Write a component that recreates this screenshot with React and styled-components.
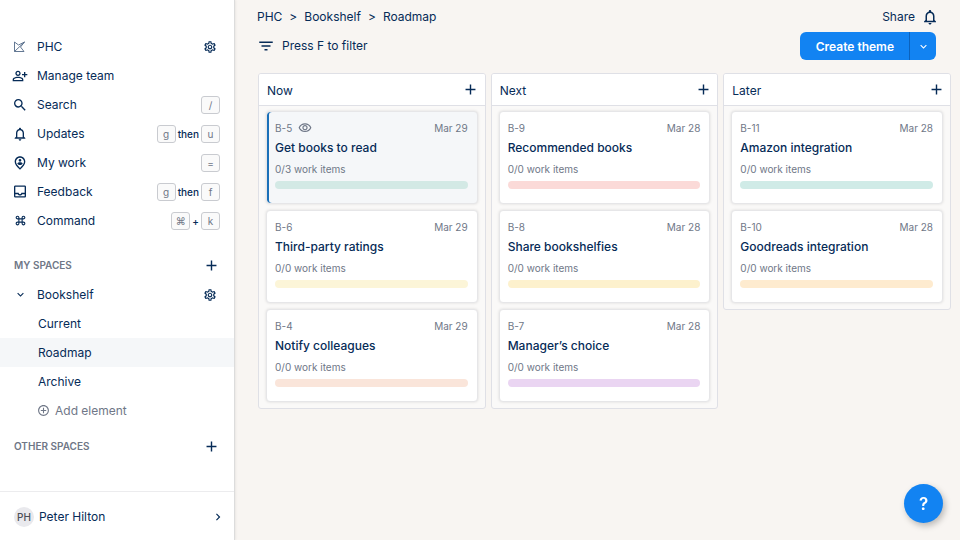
import React from "react";
import styled, { createGlobalStyle, css } from "styled-components";
import {
  MdOutlinePersonAddAlt,
  MdSearch,
  MdNotificationsNone,
  MdOutlinePersonPinCircle,
  MdOutlineInbox,
  MdKeyboardCommandKey,
  MdOutlineSettings,
  MdAdd,
  MdFilterList,
  MdOutlineVisibility,
  MdExpandMore,
  MdChevronRight,
  MdAddCircleOutline,
} from "react-icons/md";

const navy = "#062b57";
const grey = "#6f7787";
const blue = "#1283f2";

const GlobalStyle = createGlobalStyle`
  *, *::before, *::after { box-sizing: border-box; }
  body {
    margin: 0;
    background: #f8f5f2;
    color: ${navy};
    font-family: Inter, "Liberation Sans", sans-serif;
    font-size: 12px;
    line-height: 16px;
  }
  button { font: inherit; color: inherit; cursor: pointer; }
  ul, ol, h1, h2, h3, p { margin: 0; padding: 0; list-style: none; font: inherit; }
`;

const Layout = styled.div`
  display: flex;
  min-height: 100vh;
`;

const Sidebar = styled.aside`
  display: flex;
  flex-direction: column;
  flex: none;
  width: 235px;
  background: #fff;
  border-right: 1px solid #dcdcdc;
  box-shadow: 1px 0 2px rgba(0, 0, 0, 0.06);
`;

const Nav = styled.nav`
  flex: 1;
  padding-top: 32px;
`;

const rowStyle = css`
  display: flex;
  align-items: center;
  height: 29px;
`;

const NavRow = styled.li`
  ${rowStyle}
  padding-right: 14px;
`;

const SpaceRow = styled.div`
  ${rowStyle}
  padding-right: 14px;
`;

const NavLink = styled.a`
  display: flex;
  align-items: center;
  flex: 1;
  gap: 9px;
  padding-left: 12px;
  color: inherit;
  text-decoration: none;
`;

const IconSlot = styled.span`
  display: flex;
  justify-content: center;
  width: 16px;
`;

const Shortcut = styled.span`
  display: flex;
  align-items: center;
  gap: 2px;
  font-size: 10px;
  font-weight: 500;
`;

const Key = styled.kbd`
  display: flex;
  align-items: center;
  justify-content: center;
  width: 19px;
  height: 18px;
  border: 1px solid #c9cbd0;
  border-radius: 3px;
  background: #fafafa;
  color: ${grey};
  font: 400 10px/16px Inter, sans-serif;
`;

const IconButton = styled.button`
  display: flex;
  align-items: center;
  justify-content: center;
  width: 20px;
  height: 20px;
  padding: 0;
  border: 0;
  background: none;
`;

const SectionHeader = styled.div`
  ${rowStyle}
  justify-content: space-between;
  margin-top: ${(p) => (p.$tight ? "7px" : "16px")};
  padding: 0 13px 0 14px;
`;

const SectionTitle = styled.h2`
  padding-bottom: 1px;
  color: ${grey};
  font-size: 10px;
  font-weight: 600;
`;

const SubLink = styled.a`
  ${rowStyle}
  padding-left: 38px;
  background: ${(p) => (p.$active ? "#f5f7f9" : "transparent")};
  color: inherit;
  text-decoration: none;
`;

const AddElement = styled.button`
  ${rowStyle}
  gap: 5px;
  padding: 0 0 0 37px;
  border: 0;
  background: none;
  color: ${grey};
`;

const Profile = styled.button`
  display: flex;
  align-items: center;
  gap: 5px;
  height: 49px;
  padding: 2px 9px 0 14px;
  border: 0;
  border-top: 1px solid #ececee;
  background: none;
  text-align: left;
`;

const Avatar = styled.span`
  width: 20px;
  border-radius: 50%;
  background: #e9e9ed;
  color: #4b4e57;
  font-size: 10px;
  font-weight: 500;
  line-height: 20px;
  text-align: center;
`;

const ProfileName = styled.span`
  flex: 1;
`;

const Main = styled.main`
  flex: 1;
  min-width: 0;
  padding: 8px 9px 24px 22px;
`;

const TopBar = styled.header`
  display: flex;
  align-items: center;
  justify-content: space-between;
  height: 18px;
  padding-right: 11px;
`;

const Breadcrumbs = styled.ol`
  display: flex;
  gap: 7px;
`;

const PlainLink = styled.a`
  color: inherit;
  text-decoration: none;
`;

const TopActions = styled.div`
  display: flex;
  align-items: center;
  gap: 5px;
`;

const TextButton = styled.button`
  display: flex;
  align-items: center;
  gap: 7px;
  padding: 0;
  border: 0;
  background: none;
`;

const ToolBar = styled.div`
  display: flex;
  align-items: center;
  justify-content: space-between;
  margin-top: 6px;
  padding-right: 15px;
`;

const SplitButton = styled.div`
  display: flex;
  height: 28px;
  overflow: hidden;
  border-radius: 6px;
  background: ${blue};
  color: #fff;
`;

const CreateButton = styled.button`
  padding: 2px 15px 0 16px;
  border: 0;
  background: none;
  font-weight: 600;
`;

const SplitToggle = styled.button`
  display: flex;
  align-items: center;
  justify-content: center;
  width: 27px;
  padding: 0;
  border: 0;
  border-left: 1px solid #0b62bd;
  background: none;
`;

const Board = styled.div`
  display: grid;
  grid-template-columns: repeat(3, minmax(0, 1fr));
  align-items: start;
  gap: 5px;
  margin: 13px 0 0 1px;
`;

const Column = styled.section`
  overflow: hidden;
  border: 1px solid #dfe0e6;
  border-radius: 3px;
  background: #faf9f8;
`;

const ColumnHeader = styled.header`
  display: flex;
  align-items: center;
  justify-content: space-between;
  height: 32px;
  padding: 0 4px 0 8px;
  border-bottom: 1px solid #dfe0e6;
  background: #fff;
`;

const ColumnTitle = styled.h2`
  padding-top: 2px;
`;

const CardList = styled.ul`
  display: grid;
  gap: 6px;
  padding: 5px 7px 6px;
`;

const Card = styled.li`
  padding: 8px 9px 14px 8px;
  border: 1px solid #e6e6e8;
  border-radius: 4px;
  background: ${(p) => (p.$selected ? "#f5f7f9" : "#fff")};
  box-shadow: ${(p) => (p.$selected ? "inset 2px 0 0 #1b70b8, " : "")}0 0 3px rgba(0, 0, 0, 0.13);
`;

const CardMeta = styled.div`
  display: flex;
  align-items: center;
  gap: 6px;
  color: ${grey};
  font-size: 10px;
`;

const CardDate = styled.time`
  margin-left: auto;
`;

const CardTitle = styled.h3`
  margin: 2px 0 3px;
  font-weight: 500;
  line-height: 20px;
`;

const WorkItems = styled.p`
  color: ${grey};
  font-size: 10px;
`;

const ProgressBar = styled.div`
  height: 8px;
  margin-top: 4px;
  border-radius: 4px;
  background: ${(p) => p.$tone};
`;

const HelpButton = styled.button`
  position: fixed;
  right: 17px;
  bottom: 17px;
  width: 39px;
  height: 39px;
  padding: 0;
  border: 0;
  border-radius: 50%;
  background: ${blue};
  box-shadow: 2px 3px 6px rgba(0, 0, 0, 0.25);
  color: #fff;
  font-size: 17px;
  font-weight: 600;
`;

const WorkspaceLogo = () => (
  <svg width="14" height="12" viewBox="0 0 14 12" fill="none" stroke="#526a88" strokeWidth="0.9" strokeLinejoin="round">
    <path d="M1.5 1v9.5h9.5L7.5 6 11.5 1 1.5 10.5M1.5 1 5.5 4 11.5 1" />
  </svg>
);

const shortcuts = [
  { label: "PHC", icon: <WorkspaceLogo />, settings: true },
  { label: "Manage team", icon: <MdOutlinePersonAddAlt size={18} /> },
  { label: "Search", icon: <MdSearch size={18} />, keys: ["/"] },
  { label: "Updates", icon: <MdNotificationsNone size={18} />, keys: ["g", "u"], join: "then" },
  { label: "My work", icon: <MdOutlinePersonPinCircle size={16} />, keys: ["="] },
  { label: "Feedback", icon: <MdOutlineInbox size={17} />, keys: ["g", "f"], join: "then" },
  { label: "Command", icon: <MdKeyboardCommandKey size={13} />, keys: ["⌘", "k"], join: "+" },
];

const columns = [
  {
    title: "Now",
    cards: [
      { id: "B-5", date: "Mar 29", title: "Get books to read", items: "0/3", tone: "#d3e9e5", selected: true },
      { id: "B-6", date: "Mar 29", title: "Third-party ratings", items: "0/0", tone: "#fcf5d8" },
      { id: "B-4", date: "Mar 29", title: "Notify colleagues", items: "0/0", tone: "#fae5da" },
    ],
  },
  {
    title: "Next",
    cards: [
      { id: "B-9", date: "Mar 28", title: "Recommended books", items: "0/0", tone: "#fbdad8" },
      { id: "B-8", date: "Mar 28", title: "Share bookshelfies", items: "0/0", tone: "#fdf1cd" },
      { id: "B-7", date: "Mar 28", title: "Manager’s choice", items: "0/0", tone: "#ead5f2" },
    ],
  },
  {
    title: "Later",
    cards: [
      { id: "B-11", date: "Mar 28", title: "Amazon integration", items: "0/0", tone: "#d0ebe7" },
      { id: "B-10", date: "Mar 28", title: "Goodreads integration", items: "0/0", tone: "#feebcf" },
    ],
  },
];

function NavItem({ as: Row = NavRow, label, icon, keys, join, settings }) {
  return (
    <Row>
      <NavLink href="#">
        <IconSlot>{icon}</IconSlot>
        {label}
      </NavLink>
      {settings && (
        <IconButton aria-label={`${label} settings`}>
          <MdOutlineSettings size={14} />
        </IconButton>
      )}
      {keys && (
        <Shortcut>
          <Key>{keys[0]}</Key>
          {join}
          {keys[1] && <Key>{keys[1]}</Key>}
        </Shortcut>
      )}
    </Row>
  );
}

function Section({ title, tight }) {
  return (
    <SectionHeader $tight={tight}>
      <SectionTitle>{title}</SectionTitle>
      <IconButton aria-label={`Add to ${title}`}>
        <MdAdd size={17} />
      </IconButton>
    </SectionHeader>
  );
}

function ThemeCard({ card }) {
  return (
    <Card $selected={card.selected}>
      <CardMeta>
        <span>{card.id}</span>
        {card.selected && <MdOutlineVisibility size={14} />}
        <CardDate>{card.date}</CardDate>
      </CardMeta>
      <CardTitle>{card.title}</CardTitle>
      <WorkItems>{card.items} work items</WorkItems>
      <ProgressBar $tone={card.tone} />
    </Card>
  );
}

export default function App() {
  return (
    <>
      <GlobalStyle />
      <Layout>
        <Sidebar>
          <Nav>
            <ul>
              {shortcuts.map((item) => (
                <NavItem key={item.label} {...item} />
              ))}
            </ul>
            <Section title="MY SPACES" />
            <NavItem as={SpaceRow} label="Bookshelf" icon={<MdExpandMore size={13} />} settings />
            <SubLink href="#">Current</SubLink>
            <SubLink href="#" $active aria-current="page">Roadmap</SubLink>
            <SubLink href="#">Archive</SubLink>
            <AddElement>
              <MdAddCircleOutline size={13} />
              Add element
            </AddElement>
            <Section title="OTHER SPACES" tight />
          </Nav>
          <Profile>
            <Avatar>PH</Avatar>
            <ProfileName>Peter Hilton</ProfileName>
            <MdChevronRight size={14} />
          </Profile>
        </Sidebar>
        <Main>
          <TopBar>
            <Breadcrumbs>
              <li><PlainLink href="#">PHC</PlainLink></li>
              <li aria-hidden="true">&gt;</li>
              <li><PlainLink href="#">Bookshelf</PlainLink></li>
              <li aria-hidden="true">&gt;</li>
              <li><PlainLink href="#">Roadmap</PlainLink></li>
            </Breadcrumbs>
            <TopActions>
              <TextButton>Share</TextButton>
              <IconButton aria-label="Notifications">
                <MdNotificationsNone size={18} />
              </IconButton>
            </TopActions>
          </TopBar>
          <ToolBar>
            <TextButton>
              <MdFilterList size={18} />
              Press F to filter
            </TextButton>
            <SplitButton>
              <CreateButton>Create theme</CreateButton>
              <SplitToggle aria-label="More create options">
                <MdExpandMore size={13} />
              </SplitToggle>
            </SplitButton>
          </ToolBar>
          <Board>
            {columns.map((column) => (
              <Column key={column.title}>
                <ColumnHeader>
                  <ColumnTitle>{column.title}</ColumnTitle>
                  <IconButton aria-label={`Add to ${column.title}`}>
                    <MdAdd size={17} />
                  </IconButton>
                </ColumnHeader>
                <CardList>
                  {column.cards.map((card) => (
                    <ThemeCard key={card.id} card={card} />
                  ))}
                </CardList>
              </Column>
            ))}
          </Board>
        </Main>
      </Layout>
      <HelpButton aria-label="Help">?</HelpButton>
    </>
  );
}
